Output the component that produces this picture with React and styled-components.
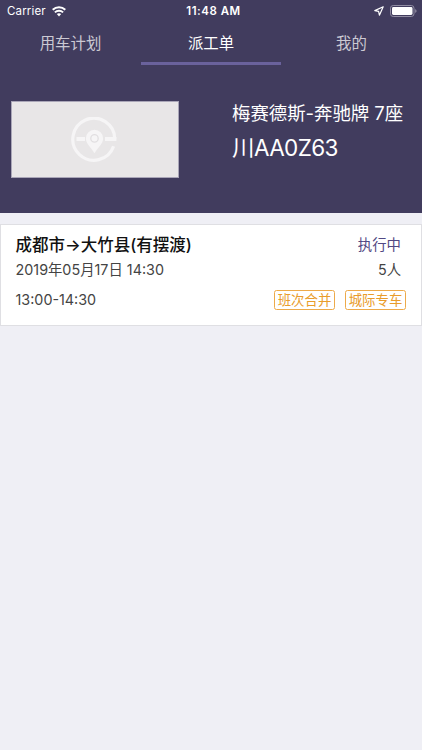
import React from "react";
import styled, { createGlobalStyle } from "styled-components";

const GlobalStyle = createGlobalStyle`
  * {
    box-sizing: border-box;
  }

  body {
    margin: 0;
    background: #efeff5;
    font-family: Inter, "Noto Sans CJK SC", sans-serif;
  }
`;

const Screen = styled.div`
  min-height: 750px;
  background: #efeff5;
`;

const Header = styled.header`
  height: 213px;
  background: #413c5e;
  color: #fff;
`;

const StatusBar = styled.div`
  display: grid;
  grid-template-columns: 1fr auto 1fr;
  align-items: center;
  height: 22px;
  padding: 0 5px 0 7px;
  font-size: 11.5px;
  line-height: 22px;
`;

const StatusSide = styled.div`
  display: flex;
  align-items: center;
  justify-content: ${(props) => (props.$end ? "flex-end" : "flex-start")};
  gap: 6px;
  letter-spacing: 0.15px;
`;

const Clock = styled.div`
  padding-left: 3px;
  font-weight: 600;
  letter-spacing: 0.5px;
`;

const Tabs = styled.nav`
  display: grid;
  grid-template-columns: 141px 140px 141px;
  height: 43px;
`;

const Tab = styled.div`
  padding-top: 11px;
  border-bottom: 3px solid ${(props) => (props.$active ? "#6a629c" : "transparent")};
  color: ${(props) => (props.$active ? "#fff" : "#cbc9d3")};
  font-size: 15.4px;
  line-height: 22px;
  text-align: center;
`;

const Vehicle = styled.section`
  display: flex;
  padding: 36px 0 0 11px;
`;

const Photo = styled.div`
  display: flex;
  align-items: center;
  justify-content: center;
  width: 168px;
  height: 77px;
  padding-right: 3px;
  border: 1px solid #aaa6b8;
  background: #e8e6e7;
`;

const VehicleInfo = styled.div`
  padding-left: 53px;
  white-space: nowrap;
`;

const Model = styled.div`
  margin-top: -1px;
  font-size: 18.4px;
  line-height: 26px;
`;

const Plate = styled.div`
  margin-top: 6px;
  font-size: 22.5px;
  letter-spacing: -0.6px;
  line-height: 32px;
`;

const Card = styled.article`
  height: 102px;
  margin: 10.5px 0 0;
  padding: 8px 15px 0 14.5px;
  border: 1px solid #dfdfe3;
  background: #fff;
`;

const Row = styled.div`
  display: flex;
  align-items: center;
  justify-content: space-between;
  height: ${(props) => props.$height}px;
  color: #444;
  font-size: 14.35px;
  line-height: 24px;
`;

const Route = styled.div`
  color: #111;
  font-size: 16.5px;
  font-weight: 500;
`;

const Status = styled.div`
  margin-right: 5px;
  color: #514883;
  font-size: 14.4px;
`;

const People = styled.div`
  margin-right: 5px;
`;

const Tags = styled.div`
  display: flex;
  gap: 10px;
`;

const Tag = styled.span`
  width: 61px;
  height: 20px;
  border: 1px solid #edaa4a;
  border-radius: 2.5px;
  color: #e99c2b;
  font-size: 13.4px;
  line-height: 18px;
  text-align: center;
  white-space: nowrap;
`;

const WifiIcon = () => (
  <svg width="14" height="11" viewBox="0 0 14 11" fill="none" stroke="#fff" strokeWidth="2">
    <path d="M.7 3.8C4.3.5 9.7.5 13.3 3.8" />
    <path d="M2.9 6.4C5.2 4.2 8.8 4.2 11.1 6.4" />
    <path d="M4.8 8.1C6.1 7 7.9 7 9.2 8.1L7 10.4Z" fill="#fff" stroke="none" />
  </svg>
);

const LocationIcon = () => (
  <svg width="10" height="10" viewBox="0 0 10 10" fill="none" stroke="#fff" strokeLinejoin="round">
    <path d="M9.2.8L.8 4.6L4.6 5.4L5.4 9.2Z" strokeWidth="1.2" />
  </svg>
);

const BatteryIcon = () => (
  <svg width="27" height="12" viewBox="0 0 27 12">
    <rect x=".5" y=".5" width="23.5" height="11" rx="2.7" fill="none" stroke="#918da3" />
    <rect x="2" y="2" width="20.5" height="8" rx="1.4" fill="#fff" />
    <path d="M25.2 4V8Q26.6 7.2 26.6 6T25.2 4Z" fill="#918da3" />
  </svg>
);

const PinLogo = () => (
  <svg width="46" height="46" viewBox="0 0 46 46" fill="none" stroke="#f6f5f6">
    <path d="M43.8 22.2A21 21 0 1 0 42.6 29.2" strokeWidth="3.2" />
    <path d="M5.5 22H14M34 22H45.4" strokeWidth="3.8" />
    <path
      d="M23.5 12.8A8.6 8.6 0 0 0 14.9 21.4C14.9 26.8 20.3 30.2 23.5 36.3C26.7 30.2 32.1 26.8 32.1 21.4A8.6 8.6 0 0 0 23.5 12.8Z"
      fill="#f6f5f6"
      stroke="none"
    />
    <circle cx="23.5" cy="21.4" r="3.7" stroke="#e1dfe1" strokeWidth="1.3" />
  </svg>
);

const tabs = ["用车计划", "派工单", "我的"];

const order = {
  route: "成都市→大竹县(有摆渡)",
  status: "执行中",
  date: "2019年05月17日 14:30",
  people: "5人",
  time: "13:00-14:30",
  tags: ["班次合并", "城际专车"],
};

const OrderCard = (props) => (
  <Card>
    <Row $height={24}>
      <Route>{props.order.route}</Route>
      <Status>{props.order.status}</Status>
    </Row>
    <Row $height={27}>
      <div>{props.order.date}</div>
      <People>{props.order.people}</People>
    </Row>
    <Row $height={33}>
      <div>{props.order.time}</div>
      <Tags>
        {props.order.tags.map((tag) => (
          <Tag key={tag}>{tag}</Tag>
        ))}
      </Tags>
    </Row>
  </Card>
);

const App = () => (
  <Screen>
    <GlobalStyle />
    <Header>
      <StatusBar>
        <StatusSide>
          Carrier
          <WifiIcon />
        </StatusSide>
        <Clock>11:48 AM</Clock>
        <StatusSide $end>
          <LocationIcon />
          <BatteryIcon />
        </StatusSide>
      </StatusBar>
      <Tabs>
        {tabs.map((tab, i) => (
          <Tab key={tab} $active={i === 1}>{tab}</Tab>
        ))}
      </Tabs>
      <Vehicle>
        <Photo>
          <PinLogo />
        </Photo>
        <VehicleInfo>
          <Model>梅赛德斯-奔驰牌 7座</Model>
          <Plate>川AA0Z63</Plate>
        </VehicleInfo>
      </Vehicle>
    </Header>
    <OrderCard order={order} />
  </Screen>
);

export default App;
